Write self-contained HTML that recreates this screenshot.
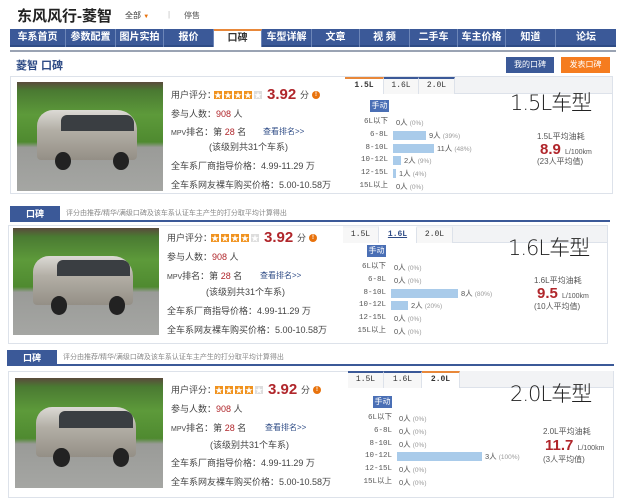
<!DOCTYPE html>
<html><head><meta charset="utf-8"><style>
*{margin:0;padding:0;box-sizing:border-box}
body{width:620px;height:504px;background:#fff;position:relative;overflow:hidden;font-family:"Liberation Sans","Noto Sans CJK SC",sans-serif;color:#333}
.a{position:absolute;white-space:nowrap;line-height:12px}
.nav{position:absolute;left:10px;top:29px;width:606px;height:18px;background:#3b5998;border-bottom:2px solid #2f4c86}
.ni{position:absolute;top:0;height:18px;line-height:18px;color:#fff;font-size:10px;font-weight:bold;text-align:center;border-right:1px solid #6d86b8}
.ni.on{background:#fff;color:#333;border-top:2px solid #e8883a;line-height:15px}
.btn{position:absolute;height:16px;line-height:16px;color:#fff;font-size:8px;text-align:center}
.panel{position:absolute;border:1px solid #dde2ea;background:#fff}
.img{position:absolute;background:linear-gradient(#5a4a3c 0,#4a7a32 8%,#5d9a3a 30%,#4f8a30 55%,#9a9b98 60%,#a5a6a3 100%)}
.van{position:absolute;left:14%;top:26%;width:68%;height:46%;background:linear-gradient(#dcdad5 0,#b3afa6 40%,#948f86 100%);border-radius:16px 20px 4px 4px}
.win{position:absolute;left:30%;top:30%;width:50%;height:15%;background:#3a3e42;border-radius:6px 8px 0 0}
.wh{position:absolute;width:11%;height:17%;background:#222;border-radius:50%;top:64%}
.t10{font-size:9px;color:#444}
.red{color:#b0262b}
.stars{position:absolute;height:10px}
.st{display:inline-block;width:10px;height:10px;background:#f0921e;color:#fff;font-size:8px;line-height:10px;text-align:center;border:1px solid #fff;vertical-align:top}
.st.g{background:#ddd}
.score{font-size:15px;font-weight:bold;color:#b0262b;line-height:16px}
.ico{position:absolute;width:8px;height:8px;border-radius:50%;background:#e8720c;color:#fff;font-size:6px;line-height:8px;text-align:center;font-weight:bold}
.tabs{position:absolute;height:17px;background:#f2f3f5;border-bottom:1px solid #dde2ea}
.tab{position:absolute;top:0;height:17px;line-height:14px;font-size:8px;font-family:"Liberation Mono",monospace;text-align:center;color:#333;border-right:1px solid #dde2ea;border-top:2px solid #3b5998;background:#f7f7f7}
.tab.on{background:#fff;border-top:2px solid #e8883a;font-weight:bold}
.big{position:absolute;font-size:21px;line-height:26px;color:#222;font-family:"DejaVu Sans","Noto Sans CJK SC",sans-serif;font-weight:300;letter-spacing:-1px;white-space:nowrap}
.md{position:absolute;background:#4a6fb5;color:#fff;font-size:8px;width:19px;height:12px;line-height:12px;text-align:center}
.lb{position:absolute;font-size:7.5px;line-height:9px;color:#555;text-align:right;width:40px;font-family:"Liberation Mono","Noto Sans CJK SC",monospace;white-space:nowrap}
.bar{position:absolute;height:9px;background:#a9cbea}
.vl{position:absolute;font-size:7.5px;line-height:9px;color:#555;white-space:nowrap}
.vl i{font-style:normal;color:#999;font-size:6.5px}
.av{position:absolute;font-size:8px;line-height:10px;color:#555;white-space:nowrap}
.avn{position:absolute;font-size:15px;line-height:16px;font-weight:bold;color:#b0262b;white-space:nowrap}
.avn span{font-size:7px;font-weight:normal;color:#555}
.hd{position:absolute;height:16px;border-bottom:2px solid #3b5998;width:600px;line-height:16px;white-space:nowrap}
.hd b{display:inline-block;background:#3b5998;color:#fff;font-size:9px;width:50px;height:16px;line-height:16px;text-align:center;vertical-align:top}
.hd span{font-size:7px;color:#888;margin-left:6px;vertical-align:top}
</style></head><body>

<div class="a" style="left:17px;top:8px;font-size:15px;line-height:18px;font-weight:bold;color:#222">东风风行-菱智</div>
<div class="a" style="left:125px;top:10px;font-size:8px;color:#333">全部 <span style="color:#e8720c;font-size:6px">▼</span></div>
<div class="a" style="left:168px;top:9px;font-size:8px;color:#bbb">|</div>
<div class="a" style="left:184px;top:10px;font-size:8px;color:#555">停售</div>

<div class="nav">
<div class="ni" style="left:0;width:56px">车系首页</div>
<div class="ni" style="left:56px;width:50px">参数配置</div>
<div class="ni" style="left:106px;width:48px">图片实拍</div>
<div class="ni" style="left:154px;width:50px">报价</div>
<div class="ni on" style="left:204px;width:48px">口碑</div>
<div class="ni" style="left:252px;width:50px">车型详解</div>
<div class="ni" style="left:302px;width:48px">文章</div>
<div class="ni" style="left:350px;width:50px">视 频</div>
<div class="ni" style="left:400px;width:48px">二手车</div>
<div class="ni" style="left:448px;width:48px">车主价格</div>
<div class="ni" style="left:496px;width:50px">知道</div>
<div class="ni" style="left:546px;width:60px;border:0">论坛</div>
</div>
<div class="a" style="left:10px;top:50px;width:606px;height:2px;background:#9aa3b3"></div>
<div class="a" style="left:16px;top:59px;font-size:11px;line-height:14px;color:#2f4c86;font-weight:bold">菱智 口碑</div>
<div class="btn" style="left:506px;top:57px;width:48px;background:#3b5998">我的口碑</div>
<div class="btn" style="left:561px;top:57px;width:49px;background:#f57c1f">发表口碑</div>

<!-- BLOCK 1 -->
<div class="panel" style="left:10px;top:76px;width:603px;height:118px"></div>
<div class="img" style="left:17px;top:82px;width:146px;height:109px"><div class="van"></div><div class="win"></div><div class="wh" style="left:26%"></div><div class="wh" style="left:66%"></div></div>
<div class="a t10" style="left:171px;top:89px">用户评分：</div>
<div class="stars" style="left:213px;top:90px"><span class="st">★</span><span class="st">★</span><span class="st">★</span><span class="st">★</span><span class="st g">★</span></div>
<div class="a score" style="left:267px;top:87px">3.92</div><div class="a t10" style="left:300px;top:89px">分</div>
<div class="ico" style="left:312px;top:91px">!</div>
<div class="a t10" style="left:171px;top:108px">参与人数：<span class="red">908</span> 人</div>
<div class="a t10" style="left:171px;top:126px"><span style="font-size:7px">MPV</span>排名：第 <span class="red">28</span> 名</div>
<div class="a" style="left:263px;top:126px;font-size:8px;color:#2f4c86">查看排名&gt;&gt;</div>
<div class="a t10" style="left:209px;top:141px">(该级别共31个车系)</div>
<div class="a t10" style="left:171px;top:160px">全车系厂商指导价格：4.99-11.29 万</div>
<div class="a t10" style="left:171px;top:179px">全车系网友裸车购买价格：5.00-10.58万</div>

<div class="tabs" style="left:345px;top:77px;width:267px"></div>
<div class="tab on" style="left:345px;top:77px;width:39px">1.5L</div>
<div class="tab" style="left:384px;top:77px;width:35px">1.6L</div>
<div class="tab" style="left:419px;top:77px;width:36px">2.0L</div>
<div class="big" style="left:510px;top:90px">1.5L车型</div>
<div class="md" style="left:370px;top:100px">手动</div>
<div class="lb" style="left:348px;top:118px">6L以下</div><div class="vl" style="left:396px;top:118px">0人 <i>(0%)</i></div>
<div class="lb" style="left:348px;top:131px">6-8L</div><div class="bar" style="left:393px;top:131px;width:33px"></div><div class="vl" style="left:429px;top:131px">9人 <i>(39%)</i></div>
<div class="lb" style="left:348px;top:144px">8-10L</div><div class="bar" style="left:393px;top:144px;width:41px"></div><div class="vl" style="left:437px;top:144px">11人 <i>(48%)</i></div>
<div class="lb" style="left:348px;top:156px">10-12L</div><div class="bar" style="left:393px;top:156px;width:8px"></div><div class="vl" style="left:404px;top:156px">2人 <i>(9%)</i></div>
<div class="lb" style="left:348px;top:169px">12-15L</div><div class="bar" style="left:393px;top:169px;width:3px"></div><div class="vl" style="left:399px;top:169px">1人 <i>(4%)</i></div>
<div class="lb" style="left:348px;top:182px">15L以上</div><div class="vl" style="left:396px;top:182px">0人 <i>(0%)</i></div>
<div class="av" style="left:537px;top:132px">1.5L平均油耗</div>
<div class="avn" style="left:540px;top:142px">8.9 <span>L/100km</span></div>
<div class="av" style="left:537px;top:157px">(23人平均值)</div>

<!-- BLOCK 2 -->
<div class="hd" style="left:10px;top:206px"><b>口碑</b><span>评分由推荐/精华/满级口碑及该车系认证车主产生的打分取平均计算得出</span></div>
<div class="panel" style="left:8px;top:225px;width:600px;height:119px"></div>
<div class="img" style="left:13px;top:228px;width:146px;height:107px"><div class="van"></div><div class="win"></div><div class="wh" style="left:26%"></div><div class="wh" style="left:66%"></div></div>
<div class="a t10" style="left:167px;top:232px">用户评分：</div>
<div class="stars" style="left:210px;top:233px"><span class="st">★</span><span class="st">★</span><span class="st">★</span><span class="st">★</span><span class="st g">★</span></div>
<div class="a score" style="left:264px;top:230px">3.92</div><div class="a t10" style="left:297px;top:232px">分</div>
<div class="ico" style="left:309px;top:234px">!</div>
<div class="a t10" style="left:167px;top:251px">参与人数：<span class="red">908</span> 人</div>
<div class="a t10" style="left:167px;top:270px"><span style="font-size:7px">MPV</span>排名：第 <span class="red">28</span> 名</div>
<div class="a" style="left:260px;top:270px;font-size:8px;color:#2f4c86">查看排名&gt;&gt;</div>
<div class="a t10" style="left:206px;top:286px">(该级别共31个车系)</div>
<div class="a t10" style="left:167px;top:305px">全车系厂商指导价格：4.99-11.29 万</div>
<div class="a t10" style="left:167px;top:324px">全车系网友裸车购买价格：5.00-10.58万</div>

<div class="tabs" style="left:343px;top:226px;width:264px"></div>
<div class="tab" style="left:343px;top:226px;width:36px;border-top-color:#f2f3f5">1.5L</div>
<div class="tab on" style="left:379px;top:226px;width:38px;border-top-color:#fff;color:#2f4c86;text-decoration:underline">1.6L</div>
<div class="tab" style="left:417px;top:226px;width:36px;border-top-color:#f2f3f5">2.0L</div>
<div class="big" style="left:508px;top:235px">1.6L车型</div>
<div class="md" style="left:367px;top:245px">手动</div>
<div class="lb" style="left:346px;top:263px">6L以下</div><div class="vl" style="left:394px;top:263px">0人 <i>(0%)</i></div>
<div class="lb" style="left:346px;top:276px">6-8L</div><div class="vl" style="left:394px;top:276px">0人 <i>(0%)</i></div>
<div class="lb" style="left:346px;top:289px">8-10L</div><div class="bar" style="left:391px;top:289px;width:67px"></div><div class="vl" style="left:461px;top:289px">8人 <i>(80%)</i></div>
<div class="lb" style="left:346px;top:301px">10-12L</div><div class="bar" style="left:391px;top:301px;width:17px"></div><div class="vl" style="left:411px;top:301px">2人 <i>(20%)</i></div>
<div class="lb" style="left:346px;top:314px">12-15L</div><div class="vl" style="left:394px;top:314px">0人 <i>(0%)</i></div>
<div class="lb" style="left:346px;top:327px">15L以上</div><div class="vl" style="left:394px;top:327px">0人 <i>(0%)</i></div>
<div class="av" style="left:534px;top:276px">1.6L平均油耗</div>
<div class="avn" style="left:537px;top:286px">9.5 <span>L/100km</span></div>
<div class="av" style="left:534px;top:302px">(10人平均值)</div>

<!-- BLOCK 3 -->
<div class="hd" style="left:7px;top:350px;width:607px"><b>口碑</b><span>评分由推荐/精华/满级口碑及该车系认证车主产生的打分取平均计算得出</span></div>
<div class="panel" style="left:8px;top:371px;width:606px;height:127px"></div>
<div class="img" style="left:15px;top:378px;width:148px;height:110px"><div class="van"></div><div class="win"></div><div class="wh" style="left:26%"></div><div class="wh" style="left:66%"></div></div>
<div class="a t10" style="left:171px;top:384px">用户评分：</div>
<div class="stars" style="left:214px;top:385px"><span class="st">★</span><span class="st">★</span><span class="st">★</span><span class="st">★</span><span class="st g">★</span></div>
<div class="a score" style="left:268px;top:382px">3.92</div><div class="a t10" style="left:301px;top:384px">分</div>
<div class="ico" style="left:313px;top:386px">!</div>
<div class="a t10" style="left:171px;top:403px">参与人数：<span class="red">908</span> 人</div>
<div class="a t10" style="left:171px;top:422px"><span style="font-size:7px">MPV</span>排名：第 <span class="red">28</span> 名</div>
<div class="a" style="left:265px;top:422px;font-size:8px;color:#2f4c86">查看排名&gt;&gt;</div>
<div class="a t10" style="left:210px;top:439px">(该级别共31个车系)</div>
<div class="a t10" style="left:171px;top:457px">全车系厂商指导价格：4.99-11.29 万</div>
<div class="a t10" style="left:171px;top:476px">全车系网友裸车购买价格：5.00-10.58万</div>

<div class="tabs" style="left:348px;top:371px;width:265px"></div>
<div class="tab" style="left:348px;top:371px;width:36px">1.5L</div>
<div class="tab" style="left:384px;top:371px;width:38px">1.6L</div>
<div class="tab on" style="left:422px;top:371px;width:38px">2.0L</div>
<div class="big" style="left:510px;top:381px">2.0L车型</div>
<div class="md" style="left:373px;top:396px">手动</div>
<div class="lb" style="left:352px;top:414px">6L以下</div><div class="vl" style="left:399px;top:414px">0人 <i>(0%)</i></div>
<div class="lb" style="left:352px;top:427px">6-8L</div><div class="vl" style="left:399px;top:427px">0人 <i>(0%)</i></div>
<div class="lb" style="left:352px;top:440px">8-10L</div><div class="vl" style="left:399px;top:440px">0人 <i>(0%)</i></div>
<div class="lb" style="left:352px;top:452px">10-12L</div><div class="bar" style="left:397px;top:452px;width:85px"></div><div class="vl" style="left:485px;top:452px">3人 <i>(100%)</i></div>
<div class="lb" style="left:352px;top:465px">12-15L</div><div class="vl" style="left:399px;top:465px">0人 <i>(0%)</i></div>
<div class="lb" style="left:352px;top:478px">15L以上</div><div class="vl" style="left:399px;top:478px">0人 <i>(0%)</i></div>
<div class="av" style="left:543px;top:427px">2.0L平均油耗</div>
<div class="avn" style="left:545px;top:438px">11.7 <span>L/100km</span></div>
<div class="av" style="left:543px;top:455px">(3人平均值)</div>

</body></html>
